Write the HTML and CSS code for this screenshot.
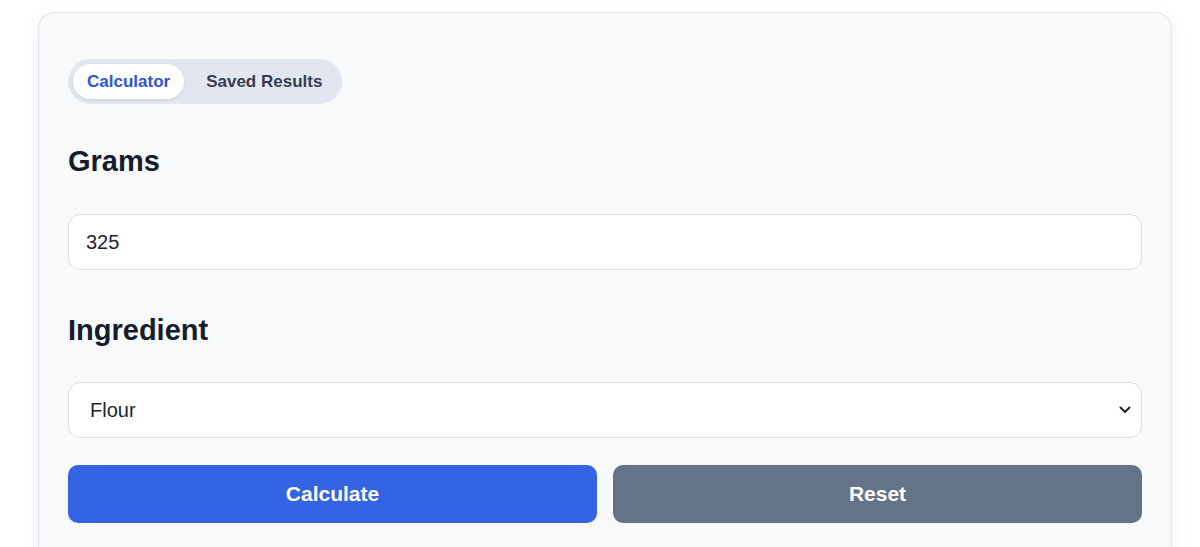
FILE: index.html
```html
<!DOCTYPE html>
<html lang="en">
<head>
<meta charset="utf-8">
<title>Grams Calculator</title>
<link rel="stylesheet" href="styles.css">
</head>
<body>
<main class="card">
  <nav class="tabs">
    <button class="tab active" type="button">Calculator</button>
    <button class="tab" type="button">Saved Results</button>
  </nav>
  <section class="field">
    <h2 class="label">Grams</h2>
    <input class="control" type="text" value="325">
  </section>
  <section class="field field-second">
    <h2 class="label">Ingredient</h2>
    <div class="select-wrap">
      <select class="control select">
        <option>Flour</option>
        <option>Sugar</option>
        <option>Butter</option>
      </select>
      <svg class="chev" viewBox="0 0 12 8" width="12" height="8" aria-hidden="true"><path d="M1.5 1.5 L6 6 L10.5 1.5" fill="none" stroke="#1f2433" stroke-width="2" stroke-linecap="round" stroke-linejoin="round"/></svg>
    </div>
  </section>
  <div class="actions">
    <button class="btn primary" type="button">Calculate</button>
    <button class="btn secondary" type="button">Reset</button>
  </div>
</main>
</body>
</html>
```
FILE: styles.css
```css
* { box-sizing: border-box; }
html, body { margin: 0; padding: 0; }
body {
  background: #ffffff;
  font-family: "Liberation Sans", Arial, sans-serif;
  color: #161c2b;
  padding: 12px 0 0 38px;
}
.card {
  width: 1134px;
  height: 560px;
  background: #f8f9fb;
  border: 1px solid #e1e4ea;
  border-radius: 16px;
  box-shadow: 0 4px 20px rgba(20, 30, 60, 0.05);
  padding: 46px 29px 30px 29px;
  display: flex;
  flex-direction: column;
}
.tabs {
  align-self: flex-start;
  display: flex;
  gap: 8px;
  background: #e2e7ef;
  border-radius: 23px;
  padding: 5px 6px 5px 5px;
  height: 45px;
}
.tab {
  border: none;
  background: transparent;
  font-family: inherit;
  font-size: 17px;
  font-weight: 700;
  color: #353d4f;
  padding: 0 14px;
  height: 35px;
  border-radius: 18px;
  cursor: pointer;
}
.tab.active {
  background: #ffffff;
  color: #2d55d6;
  box-shadow: 0 1px 3px rgba(20, 30, 60, 0.12);
}
.field { display: flex; flex-direction: column; }
.label {
  margin: 40px 0 36px 0;
  font-size: 29px;
  line-height: 34px;
  font-weight: 700;
  color: #161c2b;
}
.field-second .label { margin-top: 43px; margin-bottom: 35px; }
.control {
  width: 100%;
  height: 56px;
  border: 1px solid #dadfe8;
  border-radius: 12px;
  background: #ffffff;
  font-family: inherit;
  font-size: 20px;
  color: #1e2330;
  padding: 0 17px;
  outline: none;
}
.select-wrap { position: relative; }
.select {
  appearance: none;
  -webkit-appearance: none;
  padding-left: 21px;
}
.chev {
  position: absolute;
  right: 11px;
  top: 24px;
  pointer-events: none;
}
.actions {
  display: flex;
  gap: 16px;
  margin-top: 27px;
}
.btn {
  flex: 1;
  height: 58px;
  border: none;
  border-radius: 10px;
  font-family: inherit;
  font-size: 21px;
  font-weight: 700;
  color: #ffffff;
  cursor: pointer;
}
.primary { background: #3464e3; }
.secondary { background: #657388; }
```
